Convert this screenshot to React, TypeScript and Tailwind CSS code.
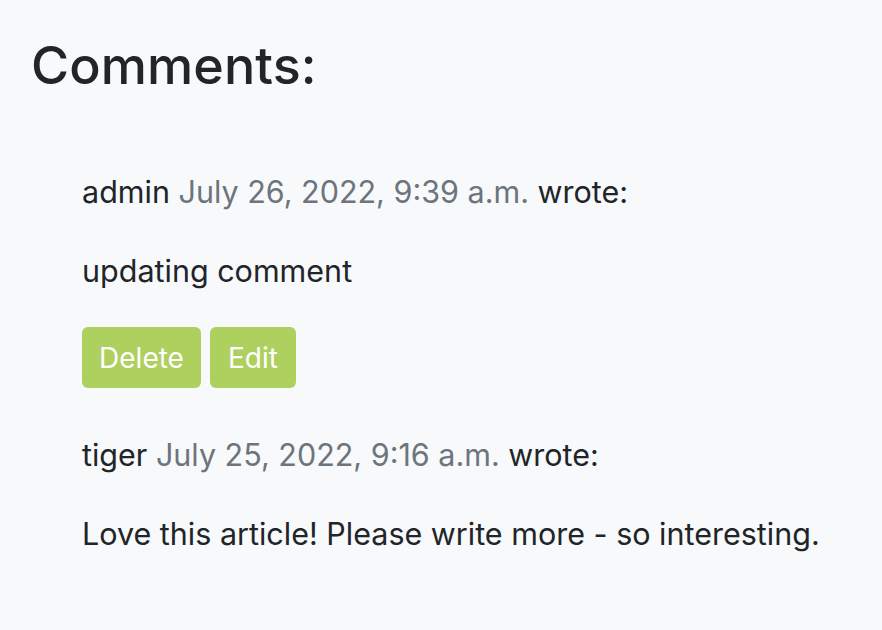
export default function App() {
  return (
    <div className="min-h-[630px] w-full bg-[#f8f9fa] text-[#212529] font-['Inter',sans-serif] pt-[35px] pl-[31px]">
      <h3 className="text-[52px] font-medium leading-[62px] tracking-[0.1px]">Comments:</h3>
      <div className="pl-[51px] pt-[72px]">
        <div>
          <p className="text-[30.5px] leading-[46px]">
            admin <span className="text-[#6c757d]">July 26, 2022, 9:39 a.m.</span> wrote:
          </p>
          <p className="text-[30.5px] leading-[46px] mt-[33px]">updating comment</p>
          <div className="flex gap-[9px] mt-[33px]">
            <button className="h-[61px] w-[119px] rounded-[6px] bg-[#aed05e] text-white text-[28px] leading-none">Delete</button>
            <button className="h-[61px] w-[86px] rounded-[6px] bg-[#aed05e] text-white text-[28px] leading-none">Edit</button>
          </div>
        </div>
        <div className="mt-[44px]">
          <p className="text-[30.5px] leading-[46px]">
            tiger <span className="text-[#6c757d]">July 25, 2022, 9:16 a.m.</span> wrote:
          </p>
          <p className="text-[30.5px] leading-[46px] mt-[33px]">Love this article! Please write more - so interesting.</p>
        </div>
      </div>
    </div>
  );
}
